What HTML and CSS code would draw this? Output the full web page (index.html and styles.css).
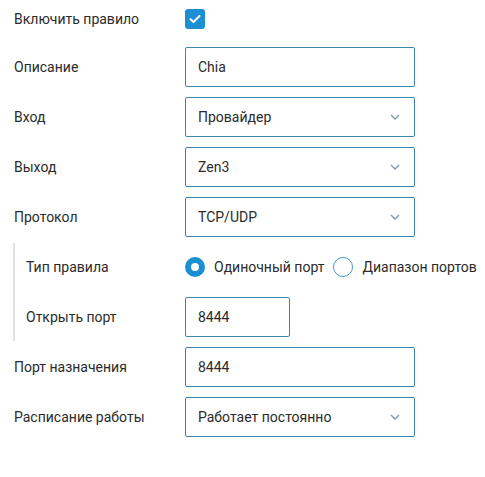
FILE: index.html
```html
<!DOCTYPE html>
<html lang="ru">
<head>
<meta charset="utf-8">
<link rel="stylesheet" href="styles.css">
</head>
<body>
<div class="form">
  <div class="row row-check">
    <div class="label">Включить правило</div>
    <span class="checkbox">
      <svg width="12" height="10" viewBox="0 0 12 10"><path d="M1.5 5.2 L4.6 8 L10.5 2" fill="none" stroke="#fff" stroke-width="2" stroke-linecap="round" stroke-linejoin="round"/></svg>
    </span>
  </div>
  <div class="row">
    <div class="label">Описание</div>
    <div class="field">Chia</div>
  </div>
  <div class="row">
    <div class="label">Вход</div>
    <div class="field select">Провайдер<svg class="chev" width="10" height="6" viewBox="0 0 10 6"><path d="M1 1 L5 5 L9 1" fill="none" stroke="#7d98ab" stroke-width="1.3"/></svg></div>
  </div>
  <div class="row">
    <div class="label">Выход</div>
    <div class="field select">Zen3<svg class="chev" width="10" height="6" viewBox="0 0 10 6"><path d="M1 1 L5 5 L9 1" fill="none" stroke="#7d98ab" stroke-width="1.3"/></svg></div>
  </div>
  <div class="row">
    <div class="label">Протокол</div>
    <div class="field select">TCP/UDP<svg class="chev" width="10" height="6" viewBox="0 0 10 6"><path d="M1 1 L5 5 L9 1" fill="none" stroke="#7d98ab" stroke-width="1.3"/></svg></div>
  </div>
  <div class="group">
    <div class="row">
      <div class="label sub">Тип правила</div>
      <div class="radios">
        <span class="radio on"></span><span class="rtext">Одиночный порт</span>
        <span class="radio"></span><span class="rtext">Диапазон портов</span>
      </div>
    </div>
    <div class="row">
      <div class="label sub">Открыть порт</div>
      <div class="field short">8444</div>
    </div>
  </div>
  <div class="row">
    <div class="label">Порт назначения</div>
    <div class="field">8444</div>
  </div>
  <div class="row">
    <div class="label">Расписание работы</div>
    <div class="field select">Работает постоянно<svg class="chev" width="10" height="6" viewBox="0 0 10 6"><path d="M1 1 L5 5 L9 1" fill="none" stroke="#7d98ab" stroke-width="1.3"/></svg></div>
  </div>
</div>
</body>
</html>
```
FILE: styles.css
```css
html, body {
  margin: 0;
  padding: 0;
  background: #fff;
}
body {
  font-family: Roboto, "Liberation Sans", sans-serif;
  font-size: 14px;
  color: #2b2b2b;
}
.form {
  display: flex;
  flex-direction: column;
  gap: 10px;
  padding: 0 0 0 14px;
}
.row {
  display: flex;
  align-items: center;
  height: 40px;
}
.row-check {
  height: 37px;
}
.label {
  width: 171px;
  flex: none;
}
.label.sub {
  width: 159px;
}
.checkbox {
  width: 20px;
  height: 20px;
  border-radius: 3px;
  background: #1b8fd2;
  display: flex;
  align-items: center;
  justify-content: center;
  margin-top: 1px;
}
.field {
  box-sizing: border-box;
  width: 230px;
  height: 40px;
  border: 1px solid #3b87ab;
  border-radius: 2px;
  padding: 0 12px;
  display: flex;
  align-items: center;
  justify-content: space-between;
}
.field.short {
  width: 105px;
}
.chev {
  margin-right: 2px;
}
.group {
  display: flex;
  flex-direction: column;
  gap: 10px;
  margin: -4px 0 -4px -1px;
  padding: 4px 0 4px 11px;
  border-left: 2px solid #e0e0e0;
}
.radios {
  display: flex;
  align-items: center;
  white-space: nowrap;
}
.radio {
  box-sizing: border-box;
  width: 20px;
  height: 20px;
  border-radius: 50%;
  border: 1.5px solid #3f9cc9;
  flex: none;
  margin-right: 9px;
}
.radio.on {
  border: 6px solid #1b8fd2;
  background: #fff;
}
.rtext {
  margin-right: 9px;
}
```
